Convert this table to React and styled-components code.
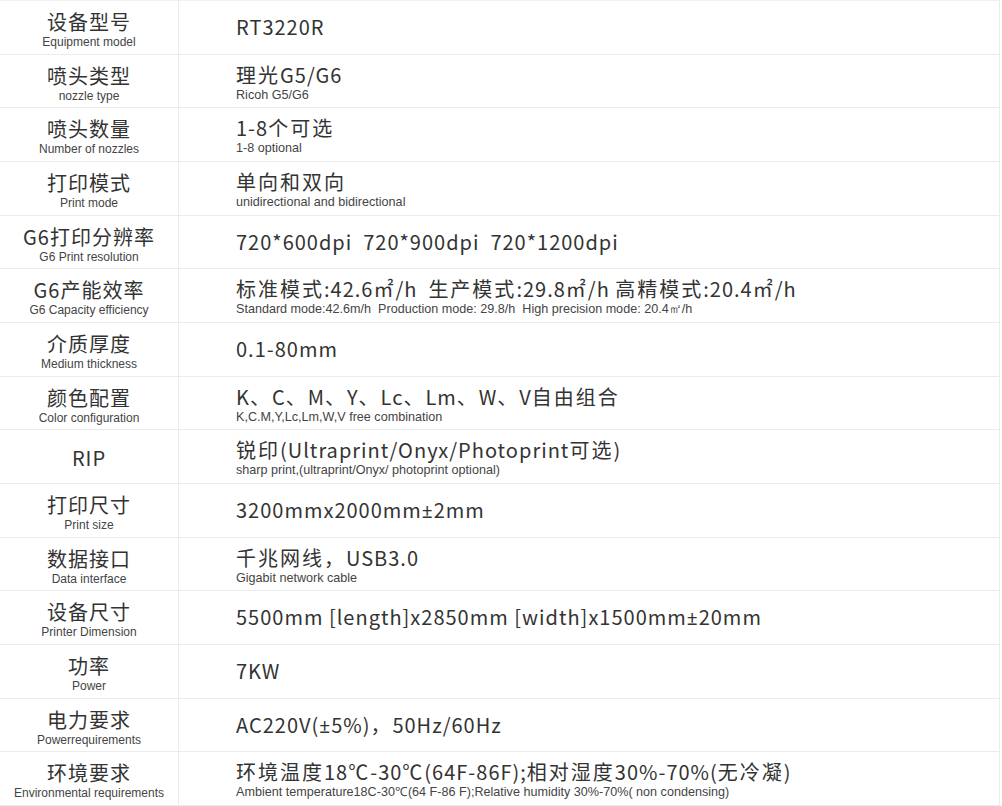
import styled, { createGlobalStyle } from "styled-components"

const GlobalStyle = createGlobalStyle`
    html, body {
        margin: 0;
        padding: 0;
        background: #FFFFFF;
    }
    body {
        font-family: "Noto Sans CJK SC", "Noto Sans", sans-serif;
        color: #333333;
    }
`

const specs = [
    { cn: "设备型号", en: "Equipment model", value: "RT3220R" },
    { cn: "喷头类型", en: "nozzle type", value: "理光G5/G6", note: "Ricoh G5/G6" },
    { cn: "喷头数量", en: "Number of nozzles", value: "1-8个可选", note: "1-8 optional" },
    { cn: "打印模式", en: "Print mode", value: "单向和双向", note: "unidirectional and bidirectional" },
    { cn: "G6打印分辨率", en: "G6 Print resolution", value: "720*600dpi  720*900dpi  720*1200dpi" },
    {
        cn: "G6产能效率",
        en: "G6 Capacity efficiency",
        value: "标准模式:42.6㎡/h  生产模式:29.8㎡/h 高精模式:20.4㎡/h",
        note: "Standard mode:42.6m/h  Production mode: 29.8/h  High precision mode: 20.4㎡/h",
    },
    { cn: "介质厚度", en: "Medium thickness", value: "0.1-80mm" },
    {
        cn: "颜色配置",
        en: "Color configuration",
        value: "K、C、M、Y、Lc、Lm、W、V自由组合",
        note: "K,C.M,Y,Lc,Lm,W,V free combination",
    },
    {
        cn: "RIP",
        value: "锐印(Ultraprint/Onyx/Photoprint可选)",
        note: "sharp print,(ultraprint/Onyx/ photoprint optional)",
    },
    { cn: "打印尺寸", en: "Print size", value: "3200mmx2000mm±2mm" },
    { cn: "数据接口", en: "Data interface", value: "千兆网线，USB3.0", note: "Gigabit network cable" },
    { cn: "设备尺寸", en: "Printer Dimension", value: "5500mm [length]x2850mm [width]x1500mm±20mm" },
    { cn: "功率", en: "Power", value: "7KW" },
    { cn: "电力要求", en: "Powerrequirements", value: "AC220V(±5%)，50Hz/60Hz" },
    {
        cn: "环境要求",
        en: "Environmental requirements",
        value: "环境温度18℃-30℃(64F-86F);相对湿度30%-70%(无冷凝)",
        note: "Ambient temperature18C-30℃(64 F-86 F);Relative humidity 30%-70%( non condensing)",
    },
]

// split a value into runs so wide (CJK) glyphs and the ± sign get their own spacing
const runPattern = /([\u2100-\u214f\u3000-\u33ff\u4e00-\u9fff\uff00-\uffef]+|±)/

function Runs({ text }) {
    return text.split(runPattern).map((part, i) => {
        if (!part) return null
        if (part === "±") return <Plus key={i}>{part}</Plus>
        if (runPattern.test(part)) return <Han key={i}>{part}</Han>
        return <span key={i}>{part}</span>
    })
}

export default function App() {
    return (
        <>
            <GlobalStyle />
            <SpecTable>
                {specs.map((row) => (
                    <SpecRow key={row.cn}>
                        <LabelCell>
                            <LabelTitle>{row.cn}</LabelTitle>
                            {row.en && <LabelSub>{row.en}</LabelSub>}
                        </LabelCell>
                        <ValueCell>
                            <ValueMain><Runs text={row.value} /></ValueMain>
                            {row.note && <ValueNote>{row.note}</ValueNote>}
                        </ValueCell>
                    </SpecRow>
                ))}
            </SpecTable>
        </>
    )
}

const SpecTable = styled.div`
    width: 1000px;
    height: 806px;
    display: flex;
    flex-direction: column;
    border-top: 1px solid #F0F0F0;
    border-right: 1px solid #EBEBEB;
    box-sizing: border-box;
`

const SpecRow = styled.div`
    flex: 1;
    display: grid;
    grid-template-columns: 179px 1fr;
    border-bottom: 1px solid #EBEBEB;
`

const LabelCell = styled.div`
    display: flex;
    flex-direction: column;
    align-items: center;
    justify-content: center;
    text-align: center;
    padding-top: 2px;
    border-right: 1px solid #EBEBEB;
`

const LabelTitle = styled.div`
    font-size: 20px;
    line-height: 28px;
    letter-spacing: 1px;
    color: #333333;
`

const LabelSub = styled.div`
    font-family: "Liberation Sans", sans-serif;
    font-size: 12px;
    line-height: 13px;
    color: #444444;
`

const ValueCell = styled.div`
    display: flex;
    flex-direction: column;
    justify-content: center;
    padding-left: 57px;
`

const ValueMain = styled.div`
    font-size: 20px;
    line-height: 28px;
    letter-spacing: 1px;
    white-space: pre;
    color: #333333;
`

const Han = styled.span`
    letter-spacing: 2px;
`

const Plus = styled.span`
    font-family: "Noto Sans", sans-serif;
    font-size: 19px;
`

const ValueNote = styled.div`
    font-family: "Liberation Sans", sans-serif;
    font-size: 12.6px;
    line-height: 13px;
    white-space: pre;
    color: #444444;
`
